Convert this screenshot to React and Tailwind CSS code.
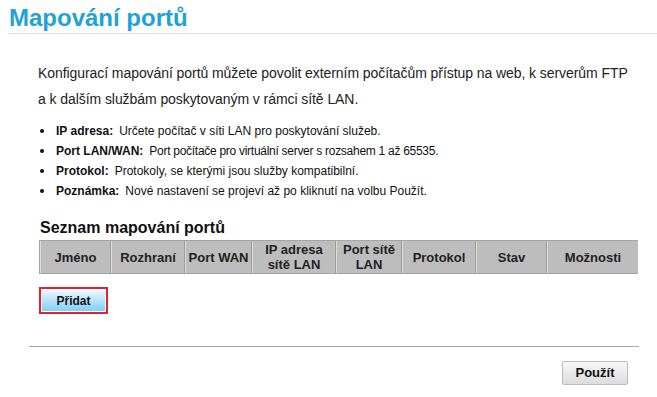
export default function App() {
  const cols = [
    { label: "Jméno", w: 71 },
    { label: "Rozhraní", w: 74 },
    { label: "Port WAN", w: 67 },
    { label: <>IP adresa<br />sítě LAN</>, w: 84 },
    { label: <>Port sítě<br />LAN</>, w: 66 },
    { label: "Protokol", w: 74 },
    { label: "Stav", w: 71 },
    { label: "Možnosti", w: 91 },
  ];
  const items = [
    ["IP adresa:", "Určete počítač v síti LAN pro poskytování služeb.", ""],
    ["Port LAN/WAN:", "Port počítače pro virtuální server s rozsahem 1 až 65535.", "tracking-[-0.28px]"],
    ["Protokol:", "Protokoly, se kterými jsou služby kompatibilní.", ""],
    ["Poznámka:", "Nové nastavení se projeví až po kliknutí na volbu Použít.", ""],
  ];
  return (
    <div className="w-[657px] h-[397px] bg-white overflow-hidden font-['Liberation_Sans',Arial,sans-serif] text-[#333]">
      <div className="pl-[9px] pt-[3px]">
        <h1 className="text-[24px] leading-[29px] font-bold text-[#1fa2da]">Mapování portů</h1>
        <div className="mt-[1px] h-px bg-[#dddddd]" />
      </div>
      <div className="pl-[38px] pt-[26px] text-[14px] leading-[26px] text-[#222] tracking-[-0.07px]">
        Konfigurací mapování portů můžete povolit externím počítačům přístup na web, k serverům FTP
        <br />a k dalším službám poskytovaným v rámci sítě LAN.
      </div>
      <ul className="mt-[9px] pl-[38px] text-[12px] leading-[20px] text-[#111]">
        {items.map(([b, t, cls]) => (
          <li key={b} className="flex items-center">
            <span className="w-[18px] flex items-center pl-[2px]">
              <span className="w-[4px] h-[4px] rounded-full bg-[#111]" />
            </span>
            <span className="font-bold">{b}</span>
            <span className={"ml-[6px] " + cls}>{t}</span>
          </li>
        ))}
      </ul>
      <div className="pl-[39px] mt-[17px]">
        <div className="text-[16px] leading-[20px] font-bold text-[#111] pl-[1px]">Seznam mapování portů</div>
        <div className="mt-[2px] flex w-[599px] h-[34px] border border-[#a4a4a4] bg-[#bdbdbd]">
          {cols.map((c, i) => (
            <div
              key={i}
              style={{ width: c.w }}
              className={
                "flex items-center justify-center text-center text-[13px] leading-[15px] font-bold text-[#222] bg-[#bdbdbd] shrink-0 border-l border-[#dcdcdc] " +
                (i < cols.length - 1 ? "border-r-[1px] border-r-[#9c9c9c]" : "")
              }
            >
              <span>{c.label}</span>
            </div>
          ))}
        </div>
        <div className="mt-[13px] w-[69px] h-[27px] border-2 border-[#e3202d] p-[1px]">
          <div className="w-full h-full bg-gradient-to-b from-[#eef8fe] via-[#b6e3fb] to-[#7fd0f8] flex items-center justify-center text-[12px] font-bold text-[#111]">
            Přidat
          </div>
        </div>
      </div>
      <div className="ml-[29px] mr-[18px] mt-[32px] h-px bg-[#aaaaaa]" />
      <div className="flex justify-end pr-[29px] mt-[14px]">
        <button className="w-[66px] h-[24px] rounded-[2px] border border-[#bcbcbc] bg-gradient-to-b from-[#f8f8f8] to-[#dcdcdc] text-[13px] font-bold text-[#111]">
          Použít
        </button>
      </div>
    </div>
  );
}
